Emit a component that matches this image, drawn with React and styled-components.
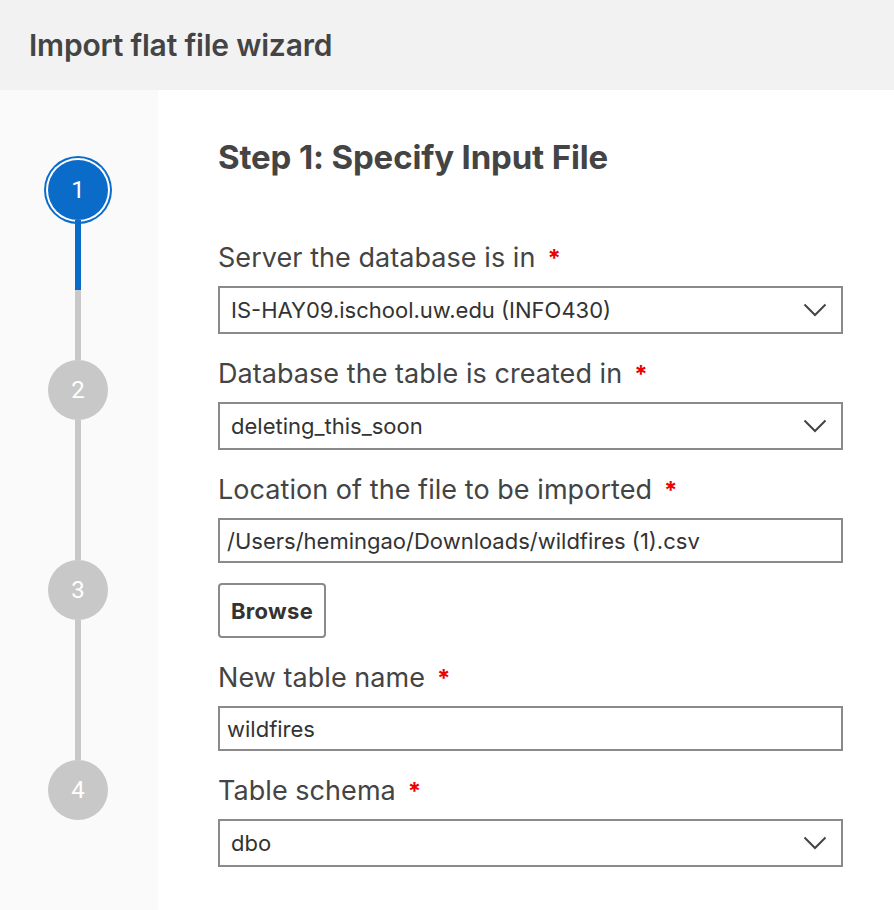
import React from "react";
import styled, { createGlobalStyle } from "styled-components";

const GlobalStyle = createGlobalStyle`
  html, body {
    margin: 0;
    padding: 0;
    background: #ffffff;
  }
  body {
    font-family: Inter, "Noto Sans", Arial, sans-serif;
    color: #444444;
  }
`;

const Page = styled.div`
  width: 894px;
  height: 910px;
  display: flex;
  flex-direction: column;
  overflow: hidden;
`;

const Header = styled.header`
  height: 90px;
  flex-shrink: 0;
  background: #f2f2f2;
  display: flex;
  align-items: center;
  padding-left: 29px;
`;

const Title = styled.h1`
  margin: 0;
  font-size: 30px;
  font-weight: 600;
  color: #444444;
  letter-spacing: -0.2px;
`;

const Body = styled.div`
  flex: 1;
  display: flex;
`;

const Sidebar = styled.nav`
  width: 158px;
  flex-shrink: 0;
  background: #fafafa;
  display: flex;
  flex-direction: column;
  align-items: center;
  padding: 70px 2px 0 0;
  box-sizing: border-box;
`;

const Step = styled.div`
  display: flex;
  flex-direction: column;
  align-items: center;
`;

const Circle = styled.div`
  width: 60px;
  height: 60px;
  border-radius: 50%;
  background: ${(p) => (p.$active ? "#0b6bc9" : "#c8c8c8")};
  box-shadow: ${(p) =>
    p.$active ? "0 0 0 2px #ffffff, 0 0 0 4px #0b6bc9" : "none"};
  color: #ffffff;
  display: flex;
  align-items: center;
  justify-content: center;
  font-family: Roboto, Inter, sans-serif;
  font-size: 24px;
  font-weight: 400;
`;

const Connector = styled.div`
  width: 6px;
  height: 140px;
  background: ${(p) =>
    p.$progress
      ? `linear-gradient(#0b6bc9 0, #0b6bc9 ${p.$progress}px, #c8c8c8 ${p.$progress}px)`
      : "#c8c8c8"};
`;

const Main = styled.main`
  flex: 1;
  background: #ffffff;
  padding: 47px 51px 0 60px;
`;

const StepTitle = styled.h2`
  margin: 0 0 63px;
  font-size: 33px;
  line-height: 40px;
  font-weight: 700;
  color: #444444;
  letter-spacing: -0.15px;
`;

const Form = styled.div`
  display: flex;
  flex-direction: column;
  gap: 22px;
`;

const Field = styled.div`
  display: flex;
  flex-direction: column;
  align-items: flex-start;
`;

const Label = styled.label`
  display: block;
  height: 30px;
  padding-top: 2px;
  font-size: 27px;
  line-height: 32px;
  letter-spacing: 0.05px;
  color: #444444;
  margin-bottom: 14px;
`;

const Required = styled.span`
  color: #ee0000;
  margin-left: 12px;
  font-weight: 700;
  font-size: 24px;
  line-height: 0;
`;

const Box = styled.div`
  align-self: stretch;
  box-sizing: border-box;
  height: ${(p) => (p.$select ? "48px" : "45px")};
  border: 2px solid #8a8a8a;
  display: flex;
  align-items: center;
  justify-content: space-between;
  padding: 0 14px 0 ${(p) => (p.$select ? "11px" : "7px")};
  font-size: 22px;
  color: #333333;
  background: #ffffff;
`;

const BoxText = styled.span`
  white-space: nowrap;
`;

const Button = styled.button`
  margin-top: 20px;
  height: 55px;
  padding: 0 11px;
  border: 2px solid #8a8a8a;
  border-radius: 4px;
  background: #ffffff;
  font-family: Inter, "Noto Sans", sans-serif;
  font-size: 22px;
  font-weight: 700;
  letter-spacing: 0.3px;
  color: #333333;
`;

const Chevron = () => (
  <svg width="24" height="14" viewBox="0 0 24 14" fill="none">
    <path d="M1.5 1.5 L12 12 L22.5 1.5" stroke="#444" strokeWidth="2" />
  </svg>
);

const steps = [1, 2, 3, 4];

const fields = [
  { label: "Server the database is in", value: "IS-HAY09.ischool.uw.edu (INFO430)", select: true },
  { label: "Database the table is created in", value: "deleting_this_soon", select: true },
  { label: "Location of the file to be imported", value: "/Users/hemingao/Downloads/wildfires (1).csv", browse: true },
  { label: "New table name", value: "wildfires" },
  { label: "Table schema", value: "dbo", select: true },
];

export default function App() {
  return (
    <Page>
      <GlobalStyle />
      <Header>
        <Title>Import flat file wizard</Title>
      </Header>
      <Body>
        <Sidebar>
          {steps.map((n, i) => (
            <Step key={n}>
              <Circle $active={n === 1}>{n}</Circle>
              {i < steps.length - 1 && <Connector $progress={n === 1 ? 70 : 0} />}
            </Step>
          ))}
        </Sidebar>
        <Main>
          <StepTitle>Step 1: Specify Input File</StepTitle>
          <Form>
            {fields.map((f) => (
              <Field key={f.label}>
                <Label>
                  {f.label}
                  <Required>*</Required>
                </Label>
                <Box $select={f.select}>
                  <BoxText>{f.value}</BoxText>
                  {f.select && <Chevron />}
                </Box>
                {f.browse && <Button>Browse</Button>}
              </Field>
            ))}
          </Form>
        </Main>
      </Body>
    </Page>
  );
}
